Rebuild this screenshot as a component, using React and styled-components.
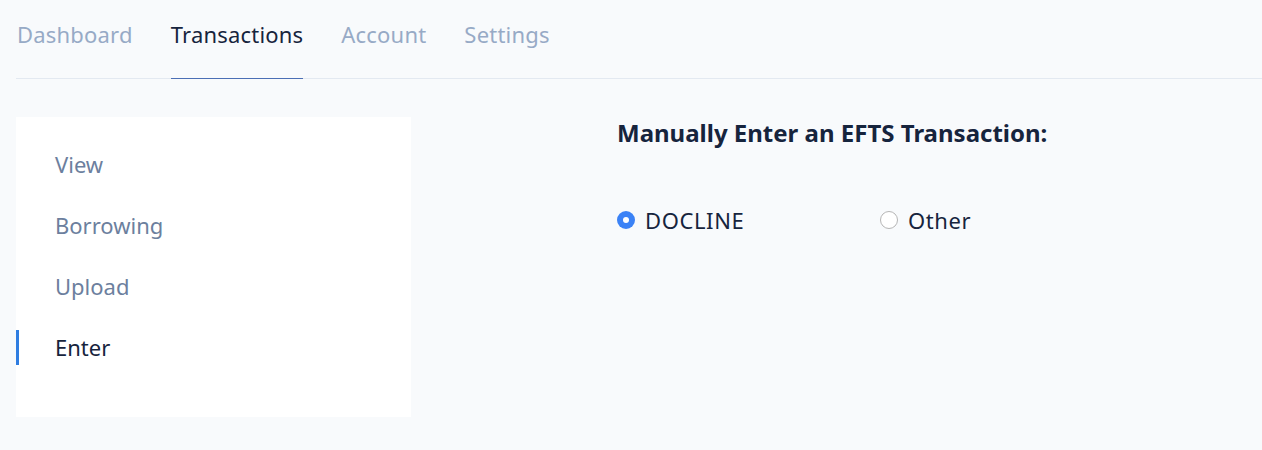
import React, { useState } from 'react';
import styled, { createGlobalStyle } from 'styled-components';

const GlobalStyle = createGlobalStyle`
  body {
    margin: 0;
    background: #f8fafc;
    font-family: 'Noto Sans', 'Liberation Sans', sans-serif;
  }
`;

const Page = styled.div`
  padding: 0 0 0 16px;
`;

const Tabs = styled.nav`
  display: flex;
  gap: 38px;
  border-bottom: 1px solid #e3e9f1;
`;

const Tab = styled.a`
  display: block;
  padding: 20px 0 29px;
  font-size: 22px;
  line-height: 29px;
  letter-spacing: 0.2px;
  color: ${(p) => (p.active ? '#16243d' : '#97aac6')};
  border-bottom: 1px solid ${(p) => (p.active ? '#4b6fb5' : 'transparent')};
  margin-bottom: -1px;
  cursor: pointer;
  &:first-child {
    margin-left: 1px;
  }
`;

const Body = styled.div`
  display: flex;
  align-items: flex-start;
  padding-top: 38px;
`;

const SideNav = styled.ul`
  list-style: none;
  margin: 0;
  padding: 30px 0 0;
  width: 395px;
  height: 300px;
  box-sizing: border-box;
  background: #ffffff;
`;

const SideItem = styled.li`
  padding: 0 0 0 ${(p) => (p.active ? '36px' : '39px')};
  height: 35px;
  margin-bottom: 26px;
  line-height: 35px;
  font-size: 22px;
  color: ${(p) => (p.active ? '#16243d' : '#6c7f9e')};
  border-left: ${(p) => (p.active ? '3px solid #2f7de1' : 'none')};
  cursor: pointer;
`;

const Main = styled.section`
  padding-left: 206px;
`;

const Heading = styled.h2`
  margin: 0;
  font-size: 24px;
  font-weight: 700;
  line-height: 32px;
  color: #16243d;
`;

const RadioRow = styled.div`
  display: flex;
  margin-top: 56px;
`;

const Option = styled.label`
  display: flex;
  align-items: center;
  width: 263px;
  font-size: 22px;
  line-height: 30px;
  letter-spacing: 0.6px;
  color: #16243d;
  cursor: pointer;
`;

const Dot = styled.span`
  flex: none;
  width: 18px;
  height: 18px;
  border-radius: 50%;
  box-sizing: border-box;
  margin-right: 10px;
  background: ${(p) => (p.checked ? '#3b82f6' : '#ffffff')};
  border: ${(p) => (p.checked ? 'none' : '1px solid #b5b5b5')};
  display: flex;
  align-items: center;
  justify-content: center;
  &::after {
    content: '';
    display: ${(p) => (p.checked ? 'block' : 'none')};
    width: 6px;
    height: 6px;
    border-radius: 50%;
    background: #ffffff;
  }
`;

const tabs = ['Dashboard', 'Transactions', 'Account', 'Settings'];
const items = ['View', 'Borrowing', 'Upload', 'Enter'];

export default function App() {
  const [source, setSource] = useState('DOCLINE');
  return (
    <Page>
      <GlobalStyle />
      <Tabs>
        {tabs.map((t) => (
          <Tab key={t} active={t === 'Transactions'}>
            {t}
          </Tab>
        ))}
      </Tabs>
      <Body>
        <SideNav>
          {items.map((i) => (
            <SideItem key={i} active={i === 'Enter'}>
              {i}
            </SideItem>
          ))}
        </SideNav>
        <Main>
          <Heading>Manually Enter an EFTS Transaction:</Heading>
          <RadioRow>
            {['DOCLINE', 'Other'].map((o) => (
              <Option key={o} onClick={() => setSource(o)}>
                <Dot checked={source === o} />
                {o}
              </Option>
            ))}
          </RadioRow>
        </Main>
      </Body>
    </Page>
  );
}
